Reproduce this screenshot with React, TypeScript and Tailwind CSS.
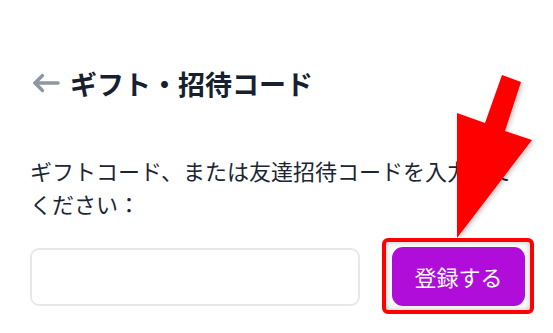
export default function App() {
  return (
    <div
      className="relative w-[553px] h-[333px] overflow-hidden bg-white"
      style={{ fontFamily: '"Noto Sans CJK JP", "Noto Sans", sans-serif' }}
    >
      <div className="w-[495px] ml-[30px] pt-[66px]">
        {/* Header */}
        <div className="flex items-center h-[36px]">
          <svg
            className="ml-[2px] mt-[-2px]"
            width="28"
            height="20"
            viewBox="0 0 28 20"
            fill="none"
            stroke="#8e96a3"
            strokeWidth="3.4"
            strokeLinecap="round"
            strokeLinejoin="round"
          >
            <path d="M26 10H3" />
            <path d="M10.5 2.5L3 10l7.5 7.5" />
          </svg>
          <h1 className="ml-[10px] text-[27px] leading-[36px] font-bold text-[#17202e]">
            ギフト・招待コード
          </h1>
        </div>

        {/* Description */}
        <p className="mt-[52px] text-[22px] leading-[33px] text-[#1d2533]">
          ギフトコード、または友達招待コードを入力してください：
        </p>

        {/* Form */}
        <div className="mt-[27px] flex items-center justify-between">
          <input
            className="w-[330px] h-[58px] rounded-[9px] border-2 border-[#e8e8e8] bg-white px-3 outline-none"
            type="text"
          />
          <button className="w-[133px] h-[59px] rounded-[11px] bg-[#b00ddb] text-white text-[22px]">
            登録する
          </button>
        </div>
      </div>

      {/* Annotation: red box */}
      <div className="absolute left-[382px] top-[238px] w-[152px] h-[76px] rounded-[6px] border-4 border-[#ff0000] shadow-[inset_0_0_6px_rgba(0,0,0,0.25)]" />

      {/* Annotation: arrow */}
      <svg
        className="absolute left-0 top-0"
        width="553"
        height="333"
        viewBox="0 0 553 333"
      >
        <defs>
          <filter id="sh" x="-20%" y="-20%" width="140%" height="140%">
            <feDropShadow dx="2" dy="2" stdDeviation="2" floodColor="#000" floodOpacity="0.2" />
          </filter>
        </defs>
        <polygon
          points="502,75 521,82 505,131 532,140 457,238 457,113 485,123"
          fill="#ff0000"
          filter="url(#sh)"
        />
      </svg>
    </div>
  )
}
